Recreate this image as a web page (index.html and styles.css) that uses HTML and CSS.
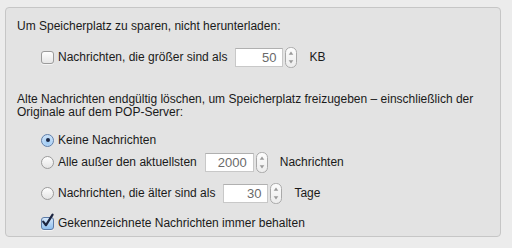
FILE: index.html
```html
<!DOCTYPE html>
<html lang="de">
<head>
<meta charset="utf-8">
<title>Speicherplatz</title>
<link rel="stylesheet" href="styles.css">
</head>
<body>
<div class="panel">
  <p class="label first">Um Speicherplatz zu sparen, nicht herunterladen:</p>

  <div class="row r1">
    <span class="cb"></span>
    <span class="txt">Nachrichten, die größer sind als</span>
    <span class="field w48">50</span>
    <span class="stepper"><svg width="12" height="21" viewBox="0 0 12 21"><defs><linearGradient id="sg1" x1="0" y1="0" x2="0" y2="1"><stop offset="0" stop-color="#fdfdfd"/><stop offset="1" stop-color="#ececec"/></linearGradient></defs><rect x="0.5" y="0.5" width="11" height="20" rx="5" fill="url(#sg1)" stroke="#a9a9a9"/><path d="M6 4.5 L8.3 7.8 L3.7 7.8 Z" fill="#9a9a9a"/><path d="M6 16.5 L8.3 13.2 L3.7 13.2 Z" fill="#9a9a9a"/></svg></span>
    <span class="unit">KB</span>
  </div>

  <p class="label two">Alte Nachrichten endgültig löschen, um Speicherplatz freizugeben – einschließlich der<br>Originale auf dem POP-Server:</p>

  <div class="row r2">
    <span class="radio on"></span>
    <span class="txt">Keine Nachrichten</span>
  </div>

  <div class="row r3">
    <span class="radio"></span>
    <span class="txt">Alle außer den aktuellsten</span>
    <span class="field w49">2000</span>
    <span class="stepper"><svg width="12" height="21" viewBox="0 0 12 21"><defs><linearGradient id="sg2" x1="0" y1="0" x2="0" y2="1"><stop offset="0" stop-color="#fdfdfd"/><stop offset="1" stop-color="#ececec"/></linearGradient></defs><rect x="0.5" y="0.5" width="11" height="20" rx="5" fill="url(#sg2)" stroke="#a9a9a9"/><path d="M6 4.5 L8.3 7.8 L3.7 7.8 Z" fill="#9a9a9a"/><path d="M6 16.5 L8.3 13.2 L3.7 13.2 Z" fill="#9a9a9a"/></svg></span>
    <span class="unit">Nachrichten</span>
  </div>

  <div class="row r4">
    <span class="radio"></span>
    <span class="txt">Nachrichten, die älter sind als</span>
    <span class="field w45">30</span>
    <span class="stepper"><svg width="12" height="21" viewBox="0 0 12 21"><defs><linearGradient id="sg3" x1="0" y1="0" x2="0" y2="1"><stop offset="0" stop-color="#fdfdfd"/><stop offset="1" stop-color="#ececec"/></linearGradient></defs><rect x="0.5" y="0.5" width="11" height="20" rx="5" fill="url(#sg3)" stroke="#a9a9a9"/><path d="M6 4.5 L8.3 7.8 L3.7 7.8 Z" fill="#9a9a9a"/><path d="M6 16.5 L8.3 13.2 L3.7 13.2 Z" fill="#9a9a9a"/></svg></span>
    <span class="unit">Tage</span>
  </div>

  <div class="row r5">
    <span class="cb on"><svg width="15" height="16" viewBox="0 0 15 16"><path d="M3.2 8.6 L6 12.2 L12.6 1.6" fill="none" stroke="#1c2540" stroke-width="2.2" stroke-linecap="round" stroke-linejoin="round"/></svg></span>
    <span class="txt">Gekennzeichnete Nachrichten immer behalten</span>
  </div>
</div>
</body>
</html>
```

FILE: styles.css
```css
html, body {
  margin: 0;
  padding: 0;
  background: #ececec;
}

body {
  padding: 7px 11px 0 5px;
  font-family: "Liberation Sans", Arial, sans-serif;
  font-size: 12px;
  color: #1a1a1a;
}

.panel {
  box-sizing: border-box;
  width: 496px;
  height: 230px;
  border: 1px solid #c6c6c6;
  border-radius: 4px;
  background: #e3e3e3;
  padding: 10px 11px 0 11px;
  display: flex;
  flex-direction: column;
}

.label {
  margin: 0;
}

.label.first {
  line-height: 16px;
}

.label.two {
  margin-top: 26px;
  line-height: 13px;
}

.row {
  display: flex;
  align-items: center;
  height: 20px;
  padding-left: 24px;
}

.r1 { margin-top: 13px; }
.r2 { margin-top: 11px; }
.r3 { margin-top: 2px; }
.r4 { margin-top: 11px; }
.r5 { margin-top: 10px; }

.txt {
  margin-left: 4px;
  white-space: nowrap;
}

.cb {
  position: relative;
  box-sizing: border-box;
  width: 13px;
  height: 13px;
  border: 1px solid #9b9b9b;
  border-radius: 3px;
  background: linear-gradient(#fefefe, #e6e6e6);
  box-shadow: 0 1px 0 rgba(255,255,255,0.6);
  flex: none;
}

.cb.on {
  border-color: #5b7aa6;
  background: linear-gradient(#d6e8fa, #8fbfee);
}

.cb.on svg {
  position: absolute;
  left: -2px;
  top: -5px;
}

.radio {
  box-sizing: border-box;
  width: 13px;
  height: 13px;
  border: 1px solid #9b9b9b;
  border-radius: 50%;
  background: linear-gradient(#fefefe, #e4e4e4);
  flex: none;
  display: flex;
  align-items: center;
  justify-content: center;
}

.radio.on {
  border-color: #5f7fab;
  background: radial-gradient(circle at 50% 70%, #9ccaf4 0%, #b9d8f6 45%, #d6e7f8 100%);
}

.radio.on::after {
  content: "";
  width: 4px;
  height: 4px;
  border-radius: 50%;
  background: #1b2744;
}

.field {
  box-sizing: border-box;
  height: 19px;
  margin-left: 8px;
  padding-right: 6px;
  background: #ffffff;
  border: 1px solid #c8c8c8;
  border-top-color: #b0b0b0;
  color: #6a6a6a;
  font-size: 13px;
  line-height: 17px;
  text-align: right;
  flex: none;
}

.w48 { width: 48px; }
.w49 { width: 49px; }
.w45 { width: 45px; }

.stepper {
  display: flex;
  margin-left: 2px;
  flex: none;
}

.unit {
  margin-left: 12px;
  white-space: nowrap;
}
```
